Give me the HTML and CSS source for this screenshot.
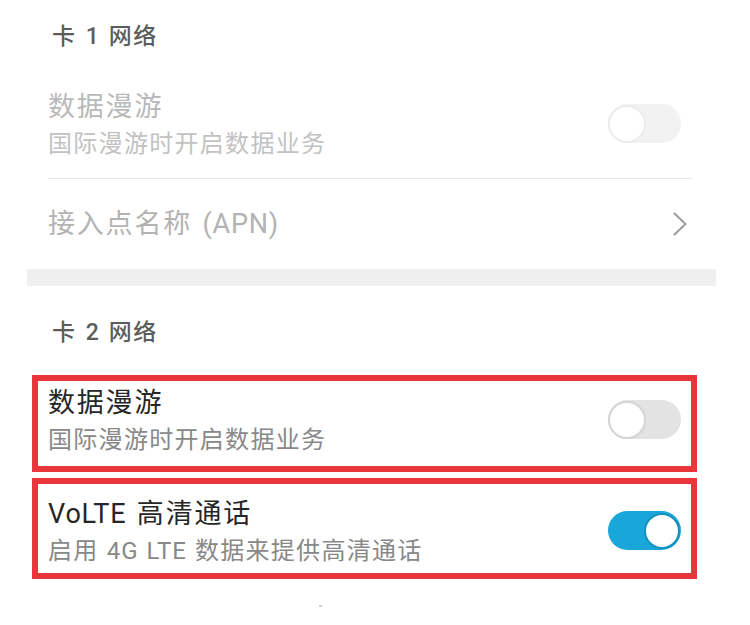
FILE: index.html
```html
<!DOCTYPE html>
<html lang="zh-CN">
<head>
<meta charset="utf-8">
<title>移动网络</title>
<link rel="stylesheet" href="styles.css">
</head>
<body>
<div class="page">
  <div class="section-title">卡 <span class="lat">1</span> 网络</div>
  <div class="list">
    <div class="row row-disabled">
      <div class="text">
        <div class="title">数据漫游</div>
        <div class="summary">国际漫游时开启数据业务</div>
      </div>
      <span class="switch switch-disabled"><span class="knob"></span></span>
    </div>
    <div class="divider"></div>
    <div class="row row-link">
      <div class="title">接入点名称 <span class="lat">(APN)</span></div>
      <svg class="chevron" width="16" height="26" viewBox="0 0 16 26"><polyline points="2.5,2.5 13.5,13 2.5,23.5" fill="none" stroke="#9c9c9c" stroke-width="2" stroke-linecap="round" stroke-linejoin="round"/></svg>
    </div>
  </div>
  <div class="band"></div>
  <div class="section-title section-title-2">卡 <span class="lat">2</span> 网络</div>
  <div class="marked-list">
    <div class="row marked marked-1">
      <div class="text">
        <div class="title">数据漫游</div>
        <div class="summary">国际漫游时开启数据业务</div>
      </div>
      <span class="switch switch-off"><span class="knob"></span></span>
    </div>
    <div class="row marked marked-2">
      <div class="text">
        <div class="title"><span class="lat">VoLTE</span> 高清通话</div>
        <div class="summary">启用 <span class="lat">4G</span> <span class="lat">LTE</span> 数据来提供高清通话</div>
      </div>
      <span class="switch switch-on"><span class="knob"></span></span>
    </div>
  </div>
  <div class="speck"></div>
</div>
</body>
</html>
```

FILE: styles.css
```css
html, body {
  margin: 0;
  padding: 0;
  background: #ffffff;
}

body {
  font-family: Roboto, "Noto Sans CJK SC", sans-serif;
}

.page {
  width: 750px;
}

.lat {
  letter-spacing: 0.8px;
}

.section-title {
  padding: 20px 0 20px 52px;
  font-size: 23px;
  font-weight: 500;
  line-height: 34px;
  color: #5c5c5c;
  letter-spacing: 1.5px;
  word-spacing: 2px;
}

.section-title-2 {
  padding-top: 30px;
  padding-bottom: 25px;
}

.list {
  margin: 0 58px 0 48px;
}

.row {
  display: flex;
  align-items: flex-start;
  justify-content: space-between;
}

.row-disabled {
  padding: 15px 0 15px;
}

.title {
  font-size: 27px;
  line-height: 36px;
  letter-spacing: 1.8px;
  word-spacing: 2px;
  color: #262626;
}

.summary {
  font-size: 24px;
  line-height: 38px;
  letter-spacing: 1.3px;
  word-spacing: 1px;
  color: #888888;
}

.row-disabled .title {
  color: #b9b9b9;
}

.row-disabled .summary {
  color: #c2c2c2;
}

.divider {
  height: 1px;
  background: #e6e6e6;
}

.row-link {
  height: 90px;
  align-items: center;
}

.row-link .title {
  color: #b3b3b3;
  line-height: 90px;
}

.chevron {
  display: block;
  margin-right: 4px;
}

.band {
  height: 17px;
  margin: 0 34px 0 27px;
  background: #efefef;
}

.marked-list {
  margin: 0 53px 0 32px;
}

.marked {
  border: 6px solid #e8363b;
  padding-left: 10px;
  padding-right: 10px;
}

.marked-1 {
  padding-top: 4px;
  padding-bottom: 7px;
}

.marked-2 {
  margin-top: 6px;
  padding-top: 12px;
  padding-bottom: 3px;
}

.switch {
  flex: none;
  display: flex;
  align-items: center;
  box-sizing: border-box;
  width: 73px;
  height: 39px;
  margin-top: 15px;
  border-radius: 20px;
}

.row-disabled .switch {
  margin-right: 11px;
}

.knob {
  display: block;
  box-sizing: border-box;
  width: 38px;
  height: 38px;
  border-radius: 50%;
  background: #ffffff;
}

.switch-disabled {
  background: #f2f2f2;
}

.switch-disabled .knob {
  border: 2px solid #ececec;
}

.switch-off {
  background: #e3e3e3;
}

.switch-off .knob {
  border: 2px solid #d5d5d5;
}

.switch-on {
  justify-content: flex-end;
  background: #19a6d9;
  padding-right: 1px;
}

.switch-on .knob {
  width: 36px;
  height: 36px;
  border: 2px solid #1491c2;
}

.speck {
  width: 3px;
  height: 2px;
  margin: 26px 0 0 319px;
  background: #d3d3d3;
}
```
